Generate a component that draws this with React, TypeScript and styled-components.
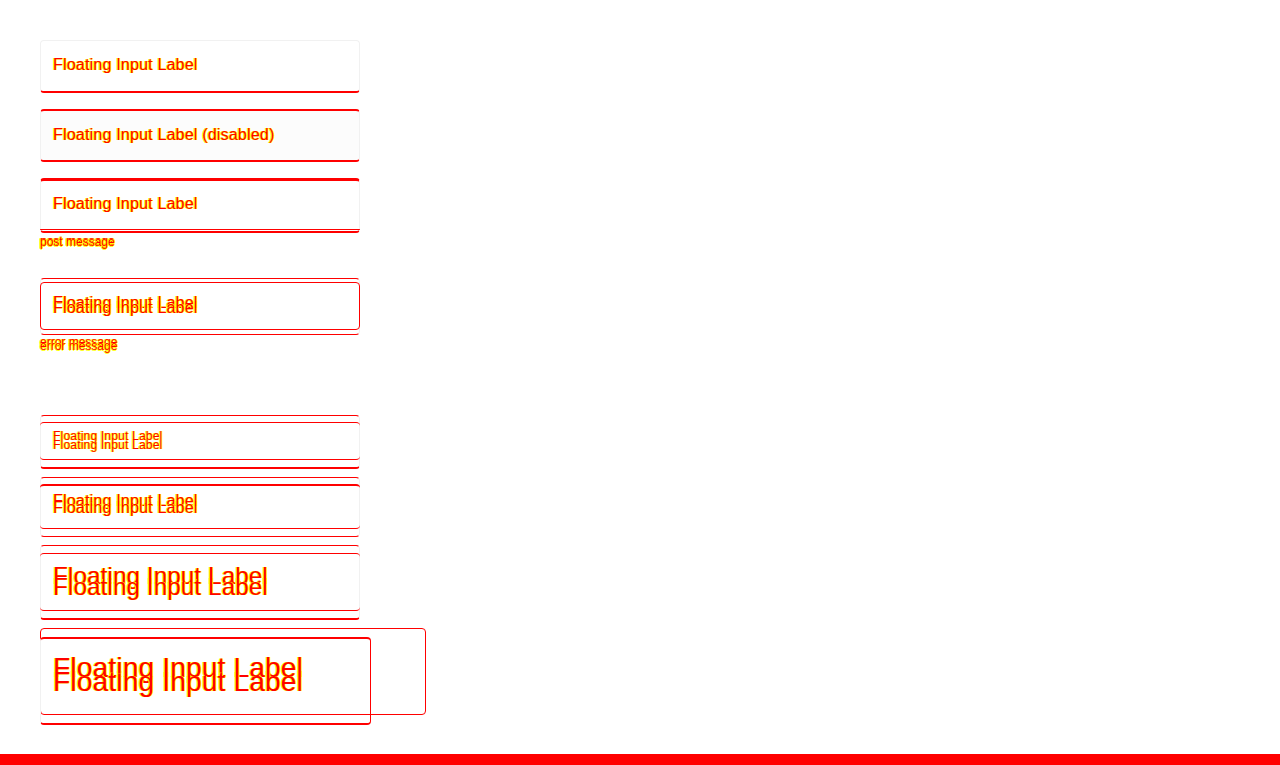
import React from "react";
import styled, { createGlobalStyle } from "styled-components";

const GlobalStyle = createGlobalStyle`
  html, body {
    margin: 0;
    padding: 0;
    background: #ffffff;
  }
  body {
    font-family: "Liberation Sans", Arial, sans-serif;
  }
`;

const RED = "#ff0000";
const YEL = "#ffff00";
const FAINT = "#f1f1f1";

const thin = `1px solid ${RED}`;
const thick = `2px solid ${RED}`;
const heavy = `3px solid ${RED}`;
const faint = `1px solid ${FAINT}`;

const Page = styled.div`
  display: flex;
  flex-direction: column;
  height: 765px;
  overflow: hidden;
`;

const Form = styled.div`
  display: flex;
  flex-direction: column;
  gap: 63px;
  padding: 40px 0 0 40px;
`;

const Section = styled.section<{ $gap: number }>`
  display: flex;
  flex-direction: column;
  align-items: flex-start;
  gap: ${(p) => p.$gap}px;
`;

const Group = styled.div<{ $pb?: number }>`
  display: flex;
  flex-direction: column;
  align-items: flex-start;
  gap: 1px;
  padding-bottom: ${(p) => p.$pb ?? 0}px;
`;

/* one input box; the ghost copy from the diff sits in the same grid cell */
const Field = styled.div<{
  $w?: number;
  $h: number;
  $top: string;
  $bottom: string;
  $side?: string;
  $bg?: string;
}>`
  display: grid;
  grid-template: 1fr / 1fr;
  box-sizing: border-box;
  width: ${(p) => p.$w ?? 320}px;
  height: ${(p) => p.$h}px;
  border-radius: 4px;
  border-top: ${(p) => p.$top};
  border-bottom: ${(p) => p.$bottom};
  border-left: ${(p) => p.$side ?? faint};
  border-right: ${(p) => p.$side ?? faint};
  background: ${(p) => p.$bg ?? "#ffffff"};

  & > * {
    grid-area: 1 / 1;
  }
`;

const GhostBox = styled.div<{
  $y: number;
  $w?: number;
  $h: number;
  $top: string;
  $bottom: string;
  $left?: string;
  $right?: string;
}>`
  align-self: start;
  box-sizing: border-box;
  margin: ${(p) => p.$y}px 0 0 -1px;
  width: ${(p) => p.$w ?? 320}px;
  height: ${(p) => p.$h}px;
  border-radius: 4px;
  border-top: ${(p) => p.$top};
  border-bottom: ${(p) => p.$bottom};
  border-left: ${(p) => p.$left ?? "none"};
  border-right: ${(p) => p.$right ?? "none"};
`;

const Label = styled.span<{ $size: number; $pt: number; $pl: number }>`
  align-self: start;
  font-family: "Liberation Sans", Arial, sans-serif;
  font-size: ${(p) => p.$size}px;
  letter-spacing: 0.2px;
  line-height: 1;
  padding-top: ${(p) => p.$pt}px;
  padding-left: ${(p) => p.$pl}px;
  color: ${RED};
  white-space: nowrap;
  text-shadow: -1px 0 ${YEL}, 1px 0 ${YEL};
`;

const Helper = styled.div`
  display: inline-grid;
  font-family: "Liberation Sans", Arial, sans-serif;
  font-size: 12px;
  line-height: 1;
  color: ${RED};
  white-space: nowrap;
  text-shadow: -1px 0 ${YEL}, 1px 0 ${YEL}, 0 1px ${YEL};

  & > * {
    grid-area: 1 / 1;
  }
`;

const HelperText = styled.span<{ $pt?: number }>`
  padding-top: ${(p) => p.$pt ?? 0}px;
`;

const Bar = styled.div`
  margin-top: auto;
  height: 11px;
  background: ${RED};
`;

const TEXT = "Floating Input Label";

export default function App() {
  return (
    <>
      <GlobalStyle />
      <Page>
        <Form>
          <Section $gap={16}>
            <Field $h={53} $top={faint} $bottom={thick}>
              <Label $size={16} $pt={16} $pl={12}>{TEXT}</Label>
            </Field>

            <Field $h={53} $top={thick} $bottom={thick} $bg="#fcfcfc">
              <Label $size={16} $pt={16} $pl={12}>{TEXT} (disabled)</Label>
            </Field>

            <Group $pb={14}>
              <Field $h={55} $top={heavy} $bottom={thick}>
                <Label $size={16} $pt={15} $pl={12}>{TEXT}</Label>
                <GhostBox $y={48} $h={1} $top={thin} $bottom="none" />
              </Field>
              <Helper>
                <HelperText $pt={1}>post message</HelperText>
                <HelperText $pt={2}>post message</HelperText>
              </Helper>
            </Group>

            <Group>
              <Field $h={57} $top={thin} $bottom={thin}>
                <Label $size={16} $pt={16} $pl={12}>{TEXT}</Label>
                <Label $size={16} $pt={21} $pl={12}>{TEXT}</Label>
                <GhostBox
                  $y={3}
                  $h={48}
                  $top={thin}
                  $bottom={thin}
                  $left={thin}
                  $right={thin}
                />
              </Field>
              <Helper>
                <HelperText>error message</HelperText>
                <HelperText $pt={4}>error message</HelperText>
              </Helper>
            </Group>
          </Section>

          <Section $gap={8}>
            <Field $h={54} $top={thin} $bottom={thick}>
              <Label $size={12} $pt={14} $pl={12}>{TEXT}</Label>
              <Label $size={12} $pt={23} $pl={12}>{TEXT}</Label>
              <GhostBox $y={6} $h={38} $top={thin} $bottom={thin} />
            </Field>

            <Field $h={60} $top={thin} $bottom={thin}>
              <Label $size={16} $pt={15} $pl={12}>{TEXT}</Label>
              <Label $size={16} $pt={22} $pl={12}>{TEXT}</Label>
              <GhostBox $y={6} $h={45} $top={thick} $bottom={thin} />
            </Field>

            <Field $h={75} $top={thin} $bottom={thick}>
              <Label $size={24} $pt={18} $pl={12}>{TEXT}</Label>
              <Label $size={24} $pt={29} $pl={12}>{TEXT}</Label>
              <GhostBox $y={7} $h={58} $top={thin} $bottom={thin} />
            </Field>

            <Field $w={386} $h={87} $top={thin} $bottom={thin} $side={thin}>
              <Label $size={28} $pt={25} $pl={12}>{TEXT}</Label>
              <Label $size={28} $pt={39} $pl={12}>{TEXT}</Label>
              <GhostBox
                $y={8}
                $w={331}
                $h={88}
                $top={thick}
                $bottom={thick}
                $left={faint}
                $right={thin}
              />
            </Field>
          </Section>
        </Form>
        <Bar />
      </Page>
    </>
  );
}
